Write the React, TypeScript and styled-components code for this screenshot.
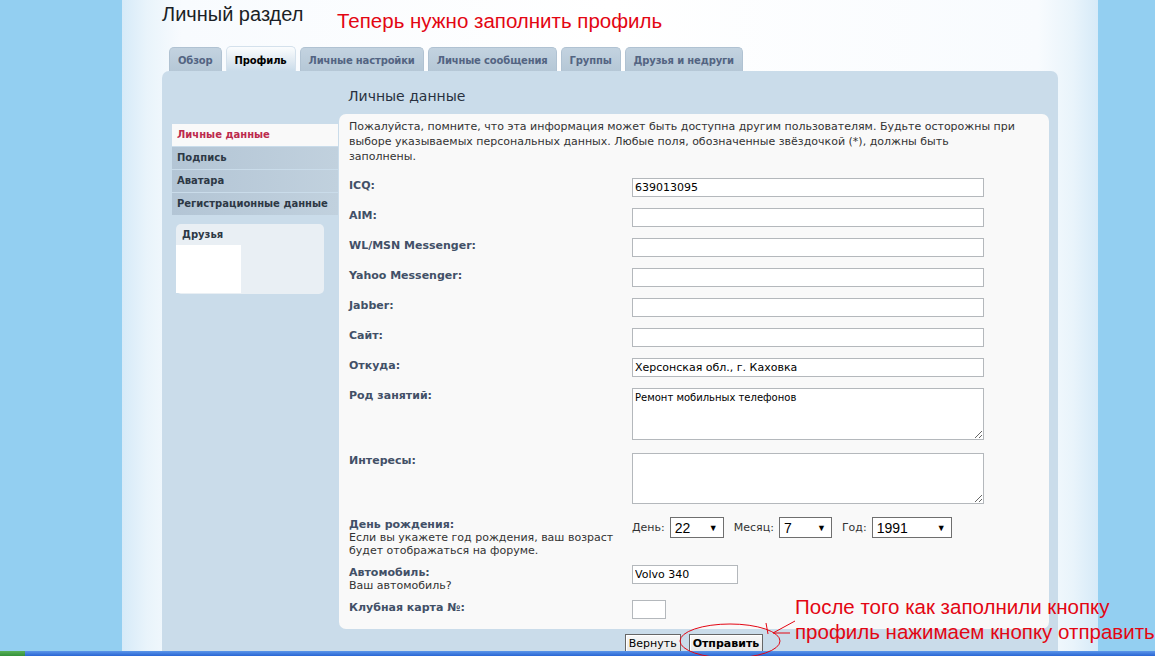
import React from "react";
import styled, { createGlobalStyle } from "styled-components";

const GlobalStyle = createGlobalStyle`
  html, body {
    margin: 0;
    padding: 0;
    height: 100%;
    overflow: hidden;
  }
  body {
    background: #93cff1;
    font-family: "DejaVu Sans", Verdana, sans-serif;
  }
  #root {
    height: 100%;
  }
`;

const Screen = styled.div`
  position: relative;
  height: 100vh;
  display: flex;
  flex-direction: column;
`;

const Desktop = styled.div`
  flex: 1;
  min-height: 0;
  display: flex;
  padding-left: 122px;
  background: #93cff1;
`;

const Wrapper = styled.div`
  width: 976px;
  box-sizing: border-box;
  padding: 0 40px;
  display: flex;
  flex-direction: column;
  background: linear-gradient(
    to right,
    #d6eaf8 0,
    #e9f4fb 25px,
    #f8fbfe 60px,
    #ffffff 50%,
    #f8fbfe calc(100% - 60px),
    #e9f4fb calc(100% - 25px),
    #d6eaf8 100%
  );
`;

const Header = styled.div`
  flex-shrink: 0;
  height: 46px;
  display: flex;
  align-items: flex-start;
`;

const Title = styled.h1`
  margin: 0;
  flex: 0 0 175px;
  padding-top: 3px;
  font-family: "Liberation Sans", Arial, sans-serif;
  font-weight: normal;
  font-size: 20px;
  line-height: 22px;
  color: #1b1f26;
`;

const Note = styled.div`
  font-family: "Liberation Sans", Arial, sans-serif;
  font-size: 20.5px;
  line-height: 25px;
  color: #e30613;
`;

const TopNote = styled(Note)`
  padding-top: 8px;
`;

const Tabs = styled.div`
  flex-shrink: 0;
  display: flex;
  align-items: flex-end;
  gap: 4px;
  height: 25px;
  margin-left: 7px;
`;

const Tab = styled.div<{ $active?: boolean }>`
  height: ${(p) => (p.$active ? 25 : 24)}px;
  box-sizing: border-box;
  padding: ${(p) => (p.$active ? 7 : 6)}px 8px 0;
  border-radius: 5px 5px 0 0;
  font-size: 10px;
  font-weight: bold;
  line-height: 13px;
  letter-spacing: -0.15px;
  white-space: nowrap;
  color: ${(p) => (p.$active ? "#000" : "#536482")};
  background: ${(p) =>
    p.$active
      ? "linear-gradient(#fbfdfe, #dfe9f1 60%, #cadcea)"
      : "linear-gradient(#c3d3e0, #b5c7d6)"};
  border: 1px solid ${(p) => (p.$active ? "#d4e1ec" : "#b0c2d2")};
  border-bottom: none;
`;

const Panel = styled.div`
  flex: 1;
  min-height: 0;
  overflow: hidden;
  display: flex;
  align-items: flex-start;
  background: #cadcea;
  border-radius: 7px 7px 0 0;
  padding-left: 10px;
`;

const Menu = styled.div`
  flex-shrink: 0;
  width: 166px;
  margin-top: 53px;
  margin-right: 1px;
`;

const MenuItem = styled.div<{ $active?: boolean }>`
  height: 22px;
  margin-bottom: 1px;
  padding-left: 5px;
  font-size: 10px;
  font-weight: bold;
  line-height: 22px;
  white-space: nowrap;
  color: ${(p) => (p.$active ? "#bc2a4d" : "#2d3845")};
  background: ${(p) =>
    p.$active ? "#f9f9f9" : "linear-gradient(to right, #b3c5d5, #c1d1de)"};
`;

const FriendsBox = styled.div`
  margin: 9px 14px 0 4px;
  height: 70px;
  border-radius: 5px;
  background: #e9eff4;
  display: flex;
  flex-direction: column;
`;

const FriendsTitle = styled.div`
  padding: 5px 0 0 6px;
  height: 16px;
  font-size: 10px;
  font-weight: bold;
  line-height: 12px;
  color: #2d3845;
`;

const FriendsList = styled.div`
  width: 65px;
  height: 48px;
  background: #ffffff;
`;

const Content = styled.div`
  flex-shrink: 0;
  width: 710px;
`;

const Heading = styled.h2`
  margin: 0;
  height: 43px;
  box-sizing: border-box;
  padding: 17px 0 0 9px;
  font-size: 14px;
  font-weight: normal;
  line-height: 16px;
  color: #28313f;
`;

const FormPanel = styled.div`
  background: #f9f9f9;
  border-radius: 7px;
  padding: 5px 10px 10px;
`;

const Intro = styled.p`
  width: 667px;
  margin: 0 0 14px;
  font-size: 11px;
  line-height: 15px;
  color: #333;
`;

const Row = styled.div<{ $gap?: number }>`
  display: grid;
  grid-template-columns: 283px 1fr;
  margin-bottom: ${(p) => p.$gap ?? 11}px;
  &:last-child {
    margin-bottom: 0;
  }
`;

const Label = styled.div`
  padding-top: 1px;
  font-size: 11px;
  line-height: 13px;
  color: #333;

  b {
    display: block;
    color: #425067;
  }
`;

const TextInput = styled.input<{ $w?: number }>`
  width: ${(p) => p.$w ?? 352}px;
  height: 19px;
  box-sizing: border-box;
  margin: 0;
  padding: 1px 2px;
  border: 1px solid #b4b8bc;
  background: #fff;
  font-family: "DejaVu Sans", Verdana, sans-serif;
  font-size: 11px;
  color: #000;
  outline: none;
`;

const TextArea = styled.textarea<{ $h: number }>`
  width: 352px;
  height: ${(p) => p.$h}px;
  box-sizing: border-box;
  margin: 0;
  padding: 3px 2px;
  border: 1px solid #b4b8bc;
  background: #fff;
  font-family: "DejaVu Sans", Verdana, sans-serif;
  font-size: 10px;
  color: #000;
  resize: both;
  display: block;
  outline: none;
`;

const DateRow = styled.div`
  display: flex;
  align-items: center;
  height: 21px;
  font-size: 11px;
  color: #333;
`;

const DatePart = styled.span<{ $gap?: number }>`
  margin-right: 5px;
  margin-left: ${(p) => p.$gap ?? 0}px;
`;

const Select = styled.div<{ $w: number }>`
  width: ${(p) => p.$w}px;
  height: 21px;
  box-sizing: border-box;
  display: flex;
  align-items: center;
  justify-content: space-between;
  padding: 0 5px 0 4px;
  border: 1px solid #6f6f6f;
  background: #fff;
  font-family: "Liberation Sans", Arial, sans-serif;
  font-size: 14px;
  color: #000;

  span {
    font-size: 9px;
  }
`;

const Buttons = styled.div`
  display: flex;
  justify-content: center;
  gap: 8px;
  margin-top: 5px;
`;

const Button = styled.button<{ $primary?: boolean }>`
  height: 20px;
  margin: 0;
  padding: 0 3px;
  border: 1px solid #666;
  box-shadow: inset 1px 1px 0 #fff;
  background: linear-gradient(#f8f8f8, #e6e6e6);
  font-family: "DejaVu Sans", Verdana, sans-serif;
  font-size: 11px;
  line-height: 14px;
  font-weight: ${(p) => (p.$primary ? "bold" : "normal")};
  color: #000;
`;

const Taskbar = styled.div`
  flex-shrink: 0;
  height: 5px;
  display: flex;
  background: linear-gradient(#5b96ea, #2a66d4);
`;

const StartButton = styled.div`
  width: 25px;
  background: linear-gradient(#58b158, #34913a);
`;

const BottomNote = styled(Note)`
  position: absolute;
  left: 795px;
  top: 594px;
  white-space: nowrap;
`;

const Marks = styled.svg`
  position: absolute;
  left: 670px;
  top: 615px;
  pointer-events: none;
`;

const fields = ["ICQ:", "AIM:", "WL/MSN Messenger:", "Yahoo Messenger:", "Jabber:", "Сайт:"];
const values = ["639013095", "", "", "", "", ""];

export default function App() {
  return (
    <Screen>
      <GlobalStyle />
      <Desktop>
        <Wrapper>
          <Header>
            <Title>Личный раздел</Title>
            <TopNote>Теперь нужно заполнить профиль</TopNote>
          </Header>
          <Tabs>
            <Tab>Обзор</Tab>
            <Tab $active>Профиль</Tab>
            <Tab>Личные настройки</Tab>
            <Tab>Личные сообщения</Tab>
            <Tab>Группы</Tab>
            <Tab>Друзья и недруги</Tab>
          </Tabs>
          <Panel>
            <Menu>
              <MenuItem $active>Личные данные</MenuItem>
              <MenuItem>Подпись</MenuItem>
              <MenuItem>Аватара</MenuItem>
              <MenuItem>Регистрационные данные</MenuItem>
              <FriendsBox>
                <FriendsTitle>Друзья</FriendsTitle>
                <FriendsList />
              </FriendsBox>
            </Menu>
            <Content>
              <Heading>Личные данные</Heading>
              <FormPanel>
                <Intro>
                  Пожалуйста, помните, что эта информация может быть доступна другим
                  пользователям. Будьте осторожны при выборе указываемых персональных
                  данных. Любые поля, обозначенные звёздочкой (*), должны быть
                  заполнены.
                </Intro>
                {fields.map((f, i) => (
                  <Row key={f}>
                    <Label>
                      <b>{f}</b>
                    </Label>
                    <TextInput defaultValue={values[i]} />
                  </Row>
                ))}
                <Row>
                  <Label>
                    <b>Откуда:</b>
                  </Label>
                  <TextInput defaultValue="Херсонская обл., г. Каховка" />
                </Row>
                <Row $gap={13}>
                  <Label>
                    <b>Род занятий:</b>
                  </Label>
                  <TextArea $h={52} defaultValue="Ремонт мобильных телефонов" />
                </Row>
                <Row $gap={13}>
                  <Label>
                    <b>Интересы:</b>
                  </Label>
                  <TextArea $h={51} defaultValue="" />
                </Row>
                <Row $gap={8}>
                  <Label>
                    <b>День рождения:</b>
                    Если вы укажете год рождения, ваш возраст будет отображаться на
                    форуме.
                  </Label>
                  <DateRow>
                    <DatePart>День:</DatePart>
                    <Select $w={54}>
                      22<span>▼</span>
                    </Select>
                    <DatePart $gap={10}>Месяц:</DatePart>
                    <Select $w={53}>
                      7<span>▼</span>
                    </Select>
                    <DatePart $gap={10}>Год:</DatePart>
                    <Select $w={80}>
                      1991<span>▼</span>
                    </Select>
                  </DateRow>
                </Row>
                <Row $gap={8}>
                  <Label>
                    <b>Автомобиль:</b>
                    Ваш автомобиль?
                  </Label>
                  <TextInput $w={106} defaultValue="Volvo 340" />
                </Row>
                <Row>
                  <Label>
                    <b>Клубная карта №:</b>
                  </Label>
                  <TextInput $w={34} defaultValue="" />
                </Row>
              </FormPanel>
              <Buttons>
                <Button>Вернуть</Button>
                <Button $primary>Отправить</Button>
              </Buttons>
            </Content>
          </Panel>
        </Wrapper>
      </Desktop>
      <Taskbar>
        <StartButton />
      </Taskbar>
      <BottomNote>
        После того как заполнили кнопку
        <br />
        профиль нажимаем кнопку отправить
      </BottomNote>
      <Marks width="130" height="45" viewBox="0 0 130 45">
        <ellipse cx="60" cy="26" rx="50" ry="17" fill="none" stroke="#e30613" strokeWidth="1" />
        <path d="M96 8 L98 19 M103 18 L125 6 M103 18 L120 18" stroke="#e30613" strokeWidth="1" fill="none" />
      </Marks>
    </Screen>
  );
}
